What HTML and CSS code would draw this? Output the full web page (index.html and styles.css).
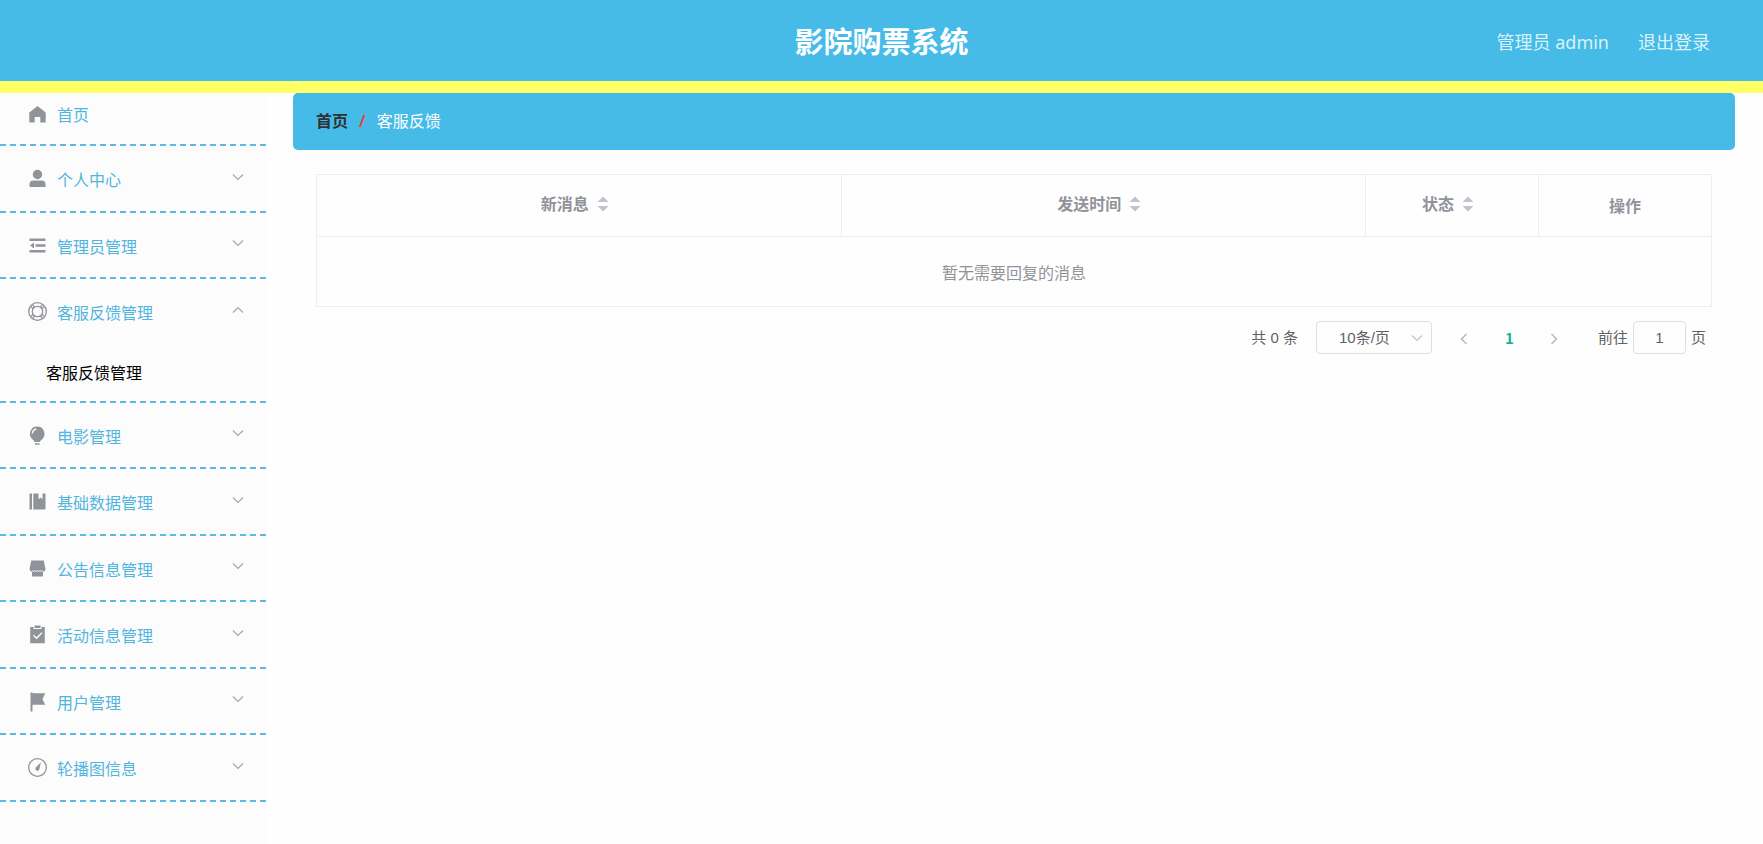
FILE: index.html
```html
<!DOCTYPE html>
<html lang="zh-CN">
<head>
<meta charset="utf-8">
<title>影院购票系统</title>
<link rel="stylesheet" href="styles.css">
</head>
<body>
<svg class="sprite" aria-hidden="true">
  <symbol id="down" viewBox="0 0 12 12"><path d="M1 3.5 6 8.5 11 3.5" fill="none" stroke="currentColor" stroke-width="1.2"/></symbol>
  <symbol id="up" viewBox="0 0 12 12"><path d="M1 8.5 6 3.5 11 8.5" fill="none" stroke="currentColor" stroke-width="1.2"/></symbol>
  <symbol id="sort" viewBox="0 0 12 16"><path d="M.5 6 6 .5 11.500 6zM.5 10 6 15.500 11.500 10z" fill="currentColor"/></symbol>
</svg>
<header class="header">
  <h1 class="title">影院购票系统</h1>
  <div class="account">
    <span>管理员 admin</span>
    <button class="logout" type="button">退出登录</button>
  </div>
</header>
<div class="layout">
  <nav class="sidebar">
    <ul class="menu">
      <li class="item home"><a class="row" href="#">
        <svg class="icon" viewBox="0 0 21 21"><path d="M10.500 2 18.700 8.600v9.900h-5.400v-5.500H7.700v5.500H2.300V8.600z"/></svg>
        <span class="label">首页</span></a></li>
      <li class="item"><button class="row" type="button">
        <svg class="icon" viewBox="0 0 21 21"><circle cx="10.500" cy="6.500" r="4.700"/><path d="M2.500 19v-2.500q0-4 4-4h8q4 0 4 4V19z"/></svg>
        <span class="label">个人中心</span><svg class="arrow"><use href="#down"/></svg></button></li>
      <li class="item"><button class="row" type="button">
        <svg class="icon" viewBox="0 0 21 21"><path d="M2.500 3.500h16v2.500h-16zM8.500 9.200h10v2.500h-10zM2.500 15h16v2.500h-16zM7 7.500v6l-4-3z"/></svg>
        <span class="label">管理员管理</span><svg class="arrow"><use href="#down"/></svg></button></li>
      <li class="item open"><button class="row" type="button" aria-expanded="true">
        <svg class="icon line" viewBox="0 0 21 21"><circle cx="10.500" cy="10.500" r="8.800"/><circle cx="10.500" cy="10.500" r="5.200"/><path d="M5.400 3.400 7.600 6.200M3.400 5.400 6.200 7.600M15.600 3.400 13.400 6.200M17.600 5.400 14.800 7.600M5.400 17.600 7.600 14.800M3.400 15.600 6.200 13.400M15.600 17.600 13.400 14.800M17.600 15.600 14.800 13.400"/></svg>
        <span class="label">客服反馈管理</span><svg class="arrow"><use href="#up"/></svg></button>
        <a class="sub" href="#">客服反馈管理</a></li>
      <li class="item"><button class="row" type="button">
        <svg class="icon" viewBox="0 0 21 21"><path d="M10.200 1.500a7.300 7.300 0 0 1 4 13.400q-1.200.8-1.200 2.100H7.500q0-1.300-1.300-2.100a7.300 7.300 0 0 1 4-13.400zM8 18.200h4.500v1.600H8z"/><path class="cut" d="M5.300 8.500q.4-3.700 4-4.500"/></svg>
        <span class="label">电影管理</span><svg class="arrow"><use href="#down"/></svg></button></li>
      <li class="item"><button class="row" type="button">
        <svg class="icon" viewBox="0 0 21 21"><path d="M2.500 2.500h2.500v16H2.500zM6.300 2.500h5.200v5.700l2-1.600 2 1.600V2.500h3v16H6.300z"/></svg>
        <span class="label">基础数据管理</span><svg class="arrow"><use href="#down"/></svg></button></li>
      <li class="item"><button class="row" type="button">
        <svg class="icon" viewBox="0 0 21 21"><path d="M4.300 2.500h12.400l1.800 8.300q0 2.700-2.500 3v4.700H5v-4.700q-2.500-.3-2.500-3z"/><path class="cut thin" d="M5.200 12.700q1.400 1.500 2.700 0 1.300 1.500 2.600 0 1.300 1.500 2.600 0 1.300 1.500 2.700 0"/></svg>
        <span class="label">公告信息管理</span><svg class="arrow"><use href="#down"/></svg></button></li>
      <li class="item"><button class="row" type="button">
        <svg class="icon" viewBox="0 0 21 21"><path d="M3.200 3h3.300v2h8V3h3.300v16.200H3.200zM7.500 1.500h6V4h-6z"/><path class="cut" d="m6.500 11.300 3 2.900 5.500-5.400"/></svg>
        <span class="label">活动信息管理</span><svg class="arrow"><use href="#down"/></svg></button></li>
      <li class="item"><button class="row" type="button">
        <svg class="icon" viewBox="0 0 21 21"><path d="M3.500 1.500h2v.800H18.200l-2.700 5.900 2.700 5.600H5.500v6.700h-2z"/></svg>
        <span class="label">用户管理</span><svg class="arrow"><use href="#down"/></svg></button></li>
      <li class="item"><button class="row" type="button">
        <svg class="icon" viewBox="0 0 21 21"><circle class="ring" cx="10.500" cy="10.500" r="8.800"/><path d="M13.900 5.300 12.200 12.600a2 2 0 1 1-3.600-1.800z"/></svg>
        <span class="label">轮播图信息</span><svg class="arrow"><use href="#down"/></svg></button></li>
    </ul>
  </nav>
  <main class="main">
    <nav class="crumbs"><a class="crumb-home" href="#">首页</a><span class="slash">/</span><span>客服反馈</span></nav>
    <section class="content">
      <table class="table">
        <colgroup><col><col><col class="narrow"><col class="narrow"></colgroup>
        <thead><tr>
          <th><span class="head">新消息<svg class="sort"><use href="#sort"/></svg></span></th>
          <th><span class="head">发送时间<svg class="sort"><use href="#sort"/></svg></span></th>
          <th><span class="head">状态<svg class="sort"><use href="#sort"/></svg></span></th>
          <th>操作</th>
        </tr></thead>
        <tbody><tr><td colspan="4">暂无需要回复的消息</td></tr></tbody>
      </table>
      <div class="pager">
        <span>共 0 条</span>
        <div class="size"><select class="select" aria-label="每页条数"><option>10条/页</option></select><svg class="size-arrow"><use href="#down"/></svg></div>
        <div class="pages">
          <button class="page" type="button" aria-label="上一页" disabled><svg class="step" viewBox="0 0 12 12"><path d="M8.500 1 3.500 6l5 5"/></svg></button>
          <button class="page current" type="button">1</button>
          <button class="page" type="button" aria-label="下一页" disabled><svg class="step" viewBox="0 0 12 12"><path d="m3.500 1 5 5-5 5"/></svg></button>
        </div>
        <label class="jump">前往<input class="jump-input" type="text" value="1">页</label>
      </div>
    </section>
  </main>
</div>
</body>
</html>
```
FILE: styles.css
```css
* { box-sizing: border-box; }
body {
  margin: 0;
  min-height: 100vh;
  display: flex;
  flex-direction: column;
  font: 16px/24px "Noto Sans", "Noto Sans CJK SC", sans-serif;
  color: #606266;
  background: #fefefe;
}
button, input, select { font: inherit; color: inherit; }
button { border: 0; padding: 0; background: none; cursor: pointer; }
a { color: inherit; text-decoration: none; }
.sprite { display: none; }

.header {
  display: grid;
  grid-template-columns: 1fr auto 1fr;
  align-items: center;
  height: 93px;
  padding: 2px 53px 0;
  background: #46bbe8;
  border-bottom: 12px solid #ffff66;
}
.title { grid-column: 2; margin: 0; font-size: 29px; line-height: 40px; color: #fff; }
.account {
  display: flex;
  justify-content: flex-end;
  gap: 29px;
  font-size: 18px;
  color: #dcf2fb;
}

.layout { flex: 1; display: flex; }
.sidebar { flex: 0 0 266px; background: #fcfcfc; }
.menu { margin: 0; padding: 0; list-style: none; }
.item { border-bottom: 2px dashed #5cb9e2; }
.row {
  display: flex;
  align-items: center;
  width: 100%;
  height: 65px;
  padding: 0 22px 0 23px;
  text-align: left;
  color: #52b5de;
}
.item:nth-child(odd) .row { height: 64px; }
.item.home .row { height: 51px; padding-bottom: 8px; }
.icon { width: 21px; height: 21px; margin: 0 9px 0 4px; fill: #909399; }
.icon.line, .ring { fill: none; stroke: #909399; stroke-width: 1.3; }
.cut { fill: none; stroke: #fcfcfc; stroke-width: 1.4; }
.cut.thin { stroke-width: 1; }
.label { flex: 1; padding-top: 3px; }
.home .label { padding-top: 0; }
.arrow { width: 12px; height: 12px; margin-bottom: 4px; color: #a6a8ac; }
.sub { display: flex; align-items: center; height: 57px; padding-left: 46px; color: #000; }

.main { flex: 1; padding: 0 28px 0 27px; }
.crumbs {
  display: flex;
  align-items: center;
  height: 57px;
  padding: 0 23px 2px;
  border-radius: 5px;
  background: #46bbe8;
  color: #fff;
}
.crumb-home { font-weight: 700; color: #303133; }
.slash { margin: 0 11px; color: #e0473c; font-weight: 700; }

.content { padding: 24px 23px; }
.table {
  width: 100%;
  table-layout: fixed;
  border-collapse: collapse;
  color: #909399;
  text-align: center;
}
.narrow { width: 173px; }
.table th, .table td { padding: 0; border: 1px solid #ebeef5; }
.table th { height: 62px; }
.table td { height: 70px; padding-top: 2px; }
.head { display: inline-flex; align-items: center; gap: 8px; margin: 0 8px 4px 0; }
.sort { width: 12px; height: 16px; color: #c0c4cc; }

.pager {
  display: flex;
  justify-content: flex-end;
  align-items: center;
  padding: 14px 6px 0 0;
  font-family: "Liberation Sans", "Noto Sans CJK SC", sans-serif;
  font-size: 15px;
}
.size { position: relative; margin: 0 15px 0 18px; }
.select, .jump-input {
  height: 33px;
  border: 1px solid #dcdfe6;
  border-radius: 4px;
  background: #fefefe;
}
.select { appearance: none; width: 116px; padding: 0 22px; }
.size-arrow { position: absolute; right: 9px; top: 11px; width: 12px; height: 12px; color: #c0c4cc; pointer-events: none; }
.pages { display: flex; gap: 10px; }
.page { width: 35px; height: 33px; color: #c0c4cc; }
.page.current { font-family: "Noto Sans CJK SC", sans-serif; font-weight: 700; color: #18b394; }
.step { width: 12px; height: 12px; fill: none; stroke: #b4b8c0; stroke-width: 1.5; vertical-align: middle; }
.jump { margin-left: 26px; }
.jump-input { width: 53px; margin: 0 5px; padding: 0; text-align: center; }
```
